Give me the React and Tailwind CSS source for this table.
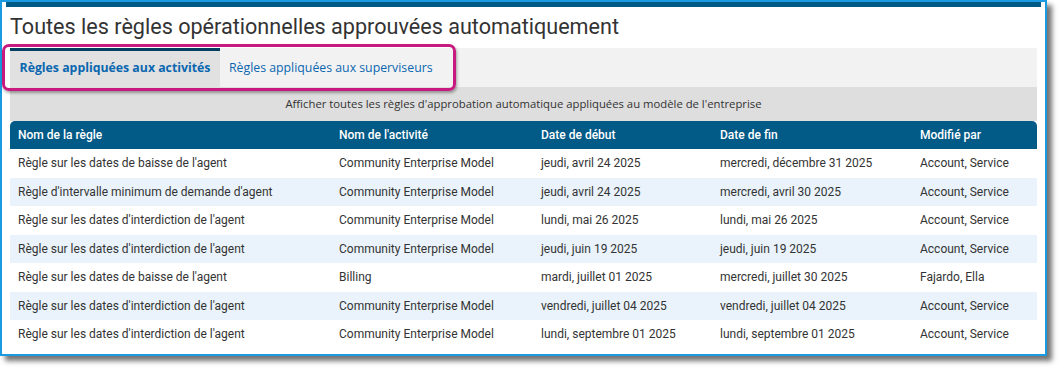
import React from 'react';

const rows = [
  ["Règle sur les dates de baisse de l'agent", 'Community Enterprise Model', 'jeudi, avril 24 2025', 'mercredi, décembre 31 2025', 'Account, Service'],
  ["Règle d'intervalle minimum de demande d'agent", 'Community Enterprise Model', 'jeudi, avril 24 2025', 'mercredi, avril 30 2025', 'Account, Service'],
  ["Règle sur les dates d'interdiction de l'agent", 'Community Enterprise Model', 'lundi, mai 26 2025', 'lundi, mai 26 2025', 'Account, Service'],
  ["Règle sur les dates d'interdiction de l'agent", 'Community Enterprise Model', 'jeudi, juin 19 2025', 'jeudi, juin 19 2025', 'Account, Service'],
  ["Règle sur les dates de baisse de l'agent", 'Billing', 'mardi, juillet 01 2025', 'mercredi, juillet 30 2025', 'Fajardo, Ella'],
  ["Règle sur les dates d'interdiction de l'agent", 'Community Enterprise Model', 'vendredi, juillet 04 2025', 'vendredi, juillet 04 2025', 'Account, Service'],
  ["Règle sur les dates d'interdiction de l'agent", 'Community Enterprise Model', 'lundi, septembre 01 2025', 'lundi, septembre 01 2025', 'Account, Service'],
];

const headers = ['Nom de la règle', "Nom de l'activité", 'Date de début', 'Date de fin', 'Modifié par'];

const cols = 'grid grid-cols-[321px_202px_179px_200px_1fr] pl-2';

export default function App() {
  return (
    <div className="w-[1060px] h-[370px] bg-white relative font-['Roboto',sans-serif]">
      {/* framed panel */}
      <div className="w-[1047px] h-[356px] border-2 border-[#1a9ae0] bg-white shadow-[5px_5px_5px_rgba(0,0,0,0.55)] flex flex-col">
        <div className="mx-1 h-[5px] bg-[#005a86]" />
        <div className="px-2 flex flex-col">
          <h1 className="text-[21.6px] leading-[26px] text-[#333] mt-[7px] h-[34px]">
            Toutes les règles opérationnelles approuvées automatiquement
          </h1>

          {/* tabs */}
          <div className="flex h-[39px] bg-[#f2f2f2] font-['Open_Sans',sans-serif] text-[12.3px]">
            <div className="w-[210px] bg-[#e1e1e1] border-t-[3px] border-[#003f5f] flex items-center justify-center font-bold text-[#0a67b0] pb-[1px]">
              Règles appliquées aux activités
            </div>
            <div className="px-[9px] flex items-center text-[#0a67b0] pt-[2px]">
              Règles appliquées aux superviseurs
            </div>
          </div>

          <div className="h-[34px] bg-[#dedede] flex items-center justify-center font-['Open_Sans',sans-serif] text-[11.3px] text-[#333]">
            Afficher toutes les règles d'approbation automatique appliquées au modèle de l'entreprise
          </div>

          {/* table */}
          <div className="text-[12px]">
            <div className={`${cols} h-[28px] items-center bg-[#025a87] text-white font-medium rounded-t-[5px]`}>
              {headers.map((h) => (
                <div key={h}>{h}</div>
              ))}
            </div>
            {rows.map((r, i) => (
              <div
                key={i}
                className={`${cols} h-[28.5px] items-center text-[#333] ${i % 2 === 1 ? 'bg-[#eaf3fb]' : 'bg-white'}`}
              >
                {r.map((c, j) => (
                  <div key={j} className="whitespace-nowrap">{c}</div>
                ))}
              </div>
            ))}
          </div>
        </div>
      </div>

      {/* annotation highlight round the tabs */}
      <div className="absolute left-[2px] top-[44px] w-[454px] h-[47px] border-[3px] border-[#c8197f] rounded-[7px] shadow-[1px_2px_3px_rgba(0,0,0,0.35)]" />
    </div>
  );
}
